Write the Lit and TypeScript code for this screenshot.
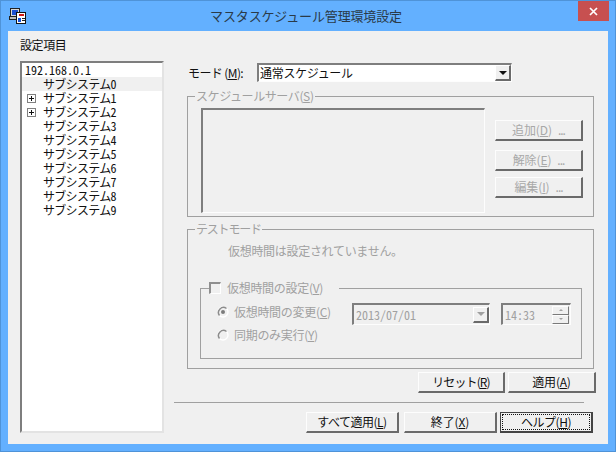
import { LitElement, html, css, svg } from "lit";
import { customElement } from "lit/decorators.js";

const appIcon = svg`<svg width="18" height="18" viewBox="0 0 18 18" shape-rendering="crispEdges">
  <rect x="1.5" y=".5" width="9" height="8" fill="#d8d8d8" stroke="#222"/>
  <rect x="3" y="2" width="6" height="5" fill="#1c4fd0"/>
  <rect x=".5" y="8.5" width="10" height="3" fill="#bcbcbc" stroke="#222"/>
  <rect x="7.5" y="4.5" width="9" height="11" fill="#fff" stroke="#111"/>
  <rect x="10" y="6" width="5" height="2" fill="#d01818"/>
  <rect x="9" y="10" width="3" height="4" fill="#1450d8"/>
  <rect x="13" y="10" width="3" height="1" fill="#222"/>
  <rect x="13" y="12" width="3" height="1" fill="#222"/>
</svg>`;

const radioRing = svg`
  <circle cx="6" cy="6" r="5" fill="#f0f0f0" stroke="#ffffff" stroke-width="1.4"/>
  <path d="M9.5 2.5A5 5 0 0 0 2.5 9.5" fill="none" stroke="#8c8c8c" stroke-width="1.5"/>
`;

const subsystems = [0, 1, 2, 3, 4, 5, 6, 7, 8, 9];

@customElement("app-root")
export class AppRoot extends LitElement {
  static styles = css`
    :host {
      display: block;
      width: 616px;
      height: 452px;
      font-family: "Noto Sans CJK JP", "Liberation Sans", sans-serif;
      font-size: 12px;
      line-height: 14px;
      color: #111;
    }
    * { box-sizing: border-box; }
    u { text-underline-offset: 1px; }
    .half { font-feature-settings: "hwid"; }
    .window {
      width: 616px;
      height: 452px;
      background: #63b0ff;
      border: 1px solid #4f93d8;
      padding: 0 7px 7px;
      display: flex;
      flex-direction: column;
    }
    .titlebar {
      height: 30px;
      flex: none;
      display: grid;
      grid-template-columns: 1fr auto 1fr;
      align-items: start;
    }
    .app-icon { padding: 7px 0 0 1px; height: 25px; }
    .title {
      font-size: 13px;
      letter-spacing: -0.15px;
      padding-top: 6px;
      line-height: 18px;
      color: #2a3a48;
      transform: translateX(-2px);
    }
    .close-wrap { display: flex; justify-content: flex-end; }
    .close {
      width: 31px;
      height: 20px;
      background: #c75050;
      color: #fff;
      display: flex;
      align-items: center;
      justify-content: center;
      margin-right: -1px;
    }
    .client {
      flex: 1;
      background: #f0f0f0;
      padding: 7px 12px 0 12px;
      display: flex;
      flex-direction: column;
      min-height: 0;
    }
    .items-label { height: 23px; letter-spacing: -0.4px; }
    .body {
      display: grid;
      grid-template-columns: 144px 1fr;
      column-gap: 10px;
    }
    .tree {
      height: 372px;
      background: #fff;
      border-style: solid;
      border-width: 2px;
      border-color: #7e7e7e #e3e3e3 #e3e3e3 #7e7e7e;
      letter-spacing: -0.7px;
    }
    .tree-row {
      height: 14px;
      display: flex;
      align-items: center;
      white-space: nowrap;
    }
    .tree-row.sel { background: #f0f0f0; }
    .tree-label { display: block; height: 14px; }
    .tree-ip { padding-left: 3px; letter-spacing: 0; }
    .expander {
      width: 16px;
      margin-left: 5px;
      flex: none;
      display: flex;
    }
    .plus { display: block; }
    .right {
      display: flex;
      flex-direction: column;
    }
    .mode-row {
      display: flex;
      align-items: center;
      padding: 2px 0 0 14px;
      height: 21px;
    }
    .mode-label { width: 69px; letter-spacing: -0.6px; white-space: nowrap; }
    .sunken {
      border-style: solid;
      border-width: 2px 1px 1px 2px;
      border-color: #7e7e7e #fdfdfd #fdfdfd #7e7e7e;
    }
    .combo {
      width: 255px;
      height: 19px;
      background: #fff;
      display: flex;
      align-items: center;
      justify-content: space-between;
      padding-left: 1px;
      letter-spacing: -0.3px;
    }
    .arrow-btn {
      width: 16px;
      height: 16px;
      flex: none;
      background: #f0f0f0;
      border-style: solid;
      border-width: 1px 2px 2px 1px;
      border-color: #fff #6a6a6a #6a6a6a #fff;
      display: flex;
      align-items: center;
      justify-content: center;
    }
    .tri {
      width: 0;
      height: 0;
      border-left: 4px solid transparent;
      border-right: 4px solid transparent;
      border-top: 4px solid #111;
    }
    .tri.off { border-top-color: #a0a0a0; }
    fieldset {
      margin: 0;
      padding: 0;
      border: 1px solid #a0a0a0;
      min-width: 0;
      color: #a0a0a0;
    }
    legend {
      padding: 0 1px;
      margin-left: 7px;
      line-height: 14px;
      letter-spacing: -0.4px;
    }
    .server-group {
      margin: 7px 2px 0 13px;
      height: 128px;
    }
    .server-body {
      display: flex;
      padding: 5px 10px 0 13px;
      justify-content: space-between;
    }
    .server-list {
      width: 284px;
      height: 105px;
      background: #f0f0f0;
      border-style: solid;
      border-width: 2px 1px 1px 2px;
      border-color: #7e7e7e #fdfdfd #fdfdfd #7e7e7e;
    }
    .server-btns {
      display: flex;
      flex-direction: column;
      padding-top: 12px;
    }
    .server-btns .btn { margin-bottom: 9px; }
    .server-btns .btn + .btn + .btn { margin-top: -3px; }
    .btn {
      height: 21px;
      background: #f0f0f0;
      border-style: solid;
      border-width: 1px 2px 2px 1px;
      border-color: #fdfdfd #6a6a6a #6a6a6a #fdfdfd;
      display: flex;
      align-items: center;
      justify-content: center;
      color: #111;
      letter-spacing: -0.5px;
      white-space: nowrap;
    }
    .btn.off { color: #a8a8a8; width: 88px; letter-spacing: -0.1px; }
    .btn.off .dots { margin-left: 6px; letter-spacing: -1px; }
    .test-group {
      margin: 5px 2px 0 13px;
      height: 147px;
    }
    .test-group > legend { letter-spacing: -1.2px; }
    .notice { padding: 8px 0 0 40px; height: 45px; letter-spacing: -0.3px; }
    .virtual-group {
      margin: 0 11px 0 12px;
      height: 78px;
    }
    .virtual-group legend {
      margin-left: 8px;
      padding: 0 16px 0 0;
      display: flex;
      align-items: center;
      letter-spacing: -0.3px;
    }
    .check {
      width: 12px;
      height: 12px;
      margin-right: 6px;
      background: #f0f0f0;
      border-style: solid;
      border-width: 2px 1px 1px 2px;
      border-color: #8f8f8f #fff #fff #8f8f8f;
    }
    .time-rows {
      display: grid;
      grid-template-columns: 135px 138px 69px;
      grid-template-rows: 22px 20px;
      padding: 8px 0 0 16px;
      align-items: start;
    }
    .radio-row {
      display: flex;
      align-items: center;
      height: 18px;
      white-space: nowrap;
      letter-spacing: -0.3px;
    }
    .radio-row.second { height: 20px; }
    .radio-row svg { margin-right: 5px; flex: none; }
    .field {
      height: 22px;
      background: #f0f0f0;
      display: flex;
      align-items: center;
      letter-spacing: 0;
      padding-left: 2px;
      justify-content: space-between;
    }
    .date { width: 138px; }
    .time { width: 70px; margin-left: 11px; }
    .spin { display: flex; flex-direction: column; width: 17px; flex: none; margin-right: 1px; }
    .spin div {
      height: 9px;
      background: #f0f0f0;
      border-style: solid;
      border-width: 1px;
      border-color: #fdfdfd #7a7a7a #7a7a7a #fdfdfd;
      display: flex;
      align-items: center;
      justify-content: center;
    }
    .spin i { width: 0; height: 0; border-left: 2px solid transparent; border-right: 2px solid transparent; }
    .spin .up i { border-bottom: 2px solid #a0a0a0; }
    .spin .down i { border-top: 2px solid #a0a0a0; }
    .apply-row {
      display: flex;
      justify-content: flex-end;
      gap: 3px;
      margin-top: 3px;
    }
    .apply-row .btn { height: 21px; width: 87px; }
    .apply-row .btn.wide { width: 88px; letter-spacing: -0.2px; }
    .apply-row .btn.reset { letter-spacing: -0.9px; }
    .sep {
      height: 1px;
      background: #a0a0a0;
      margin: 9px 12px 0 0;
    }
    .bottom-row {
      display: flex;
      justify-content: flex-end;
      margin-top: 9px;
      margin-right: 3px;
    }
    .bottom-row .btn { height: 21px; width: 93px; }
    .bottom-row .btn.quit { margin-left: 5px; letter-spacing: -0.1px; }
    .bottom-row .help {
      margin-left: 3px;
      border: 1px solid #444;
      border-right-width: 2px;
      border-bottom-width: 2px;
      padding: 1px;
    }
    .focus {
      width: 100%;
      height: 100%;
      border: 1px dotted #111;
      display: flex;
      align-items: center;
      justify-content: center;
    }
  `;

  render() {
    return html`
      <div class="window">
        <div class="titlebar">
          <div class="app-icon">${appIcon}</div>
          <div class="title">マスタスケジュール管理環境設定</div>
          <div class="close-wrap">
            <div class="close">
              <svg width="9" height="9" viewBox="0 0 9 9"><path d="M1 1L8 8M8 1L1 8" stroke="#fff" stroke-width="1.7"/></svg>
            </div>
          </div>
        </div>
        <div class="client">
          <div class="items-label">設定項目</div>
          <div class="body">
            <div class="tree">
              <div class="tree-row tree-ip half">192.168.0.1</div>
              ${subsystems.map(
                (n) => html`<div class="tree-row ${n === 0 ? "sel" : ""}">
                  <span class="expander">
                    ${n === 1 || n === 2
                      ? html`<svg class="plus" width="9" height="9" viewBox="0 0 9 9" shape-rendering="crispEdges">
                          <rect x=".5" y=".5" width="8" height="8" fill="#fff" stroke="#808080"/>
                          <path d="M2 4.5H7M4.5 2V7" stroke="#111"/>
                        </svg>`
                      : ""}
                  </span>
                  <span class="tree-label">サブシステム<span class="half">${n}</span></span>
                </div>`
              )}
            </div>
            <div class="right">
              <div class="mode-row">
                <span class="mode-label">モード (<u>M</u>):</span>
                <div class="combo sunken">
                  <span>通常スケジュール</span>
                  <span class="arrow-btn"><span class="tri"></span></span>
                </div>
              </div>
              <fieldset class="server-group">
                <legend>スケジュールサーバ(<u>S</u>)</legend>
                <div class="server-body">
                  <div class="server-list"></div>
                  <div class="server-btns">
                    <div class="btn off">追加(<u>D</u>)<span class="dots">...</span></div>
                    <div class="btn off">解除(<u>E</u>)<span class="dots">...</span></div>
                    <div class="btn off">編集(<u>I</u>)<span class="dots">...</span></div>
                  </div>
                </div>
              </fieldset>
              <fieldset class="test-group">
                <legend>テストモード</legend>
                <div class="notice">仮想時間は設定されていません。</div>
                <fieldset class="virtual-group">
                  <legend><span class="check"></span>仮想時間の設定(<u>V</u>)</legend>
                  <div class="time-rows">
                    <div class="radio-row">
                      <svg width="12" height="12" viewBox="0 0 12 12">
                        ${radioRing}
                        <circle cx="6" cy="6" r="2" fill="#7c7c7c"/>
                      </svg>
                      <span>仮想時間の変更(<u>C</u>)</span>
                    </div>
                    <div class="field sunken date half">
                      <span>2013/07/01</span>
                      <span class="arrow-btn"><span class="tri off"></span></span>
                    </div>
                    <div class="field sunken time half">
                      <span>14:33</span>
                      <span class="spin">
                        <div class="up"><i></i></div>
                        <div class="down"><i></i></div>
                      </span>
                    </div>
                    <div class="radio-row second">
                      <svg width="12" height="12" viewBox="0 0 12 12">${radioRing}</svg>
                      <span>同期のみ実行(<u>Y</u>)</span>
                    </div>
                  </div>
                </fieldset>
              </fieldset>
              <div class="apply-row">
                <div class="btn reset">リセット(<u>R</u>)</div>
                <div class="btn wide">適用(<u>A</u>)</div>
              </div>
              <div class="sep"></div>
              <div class="bottom-row">
                <div class="btn">すべて適用(<u>L</u>)</div>
                <div class="btn quit">終了(<u>X</u>)</div>
                <div class="btn help"><div class="focus">ヘルプ(<u>H</u>)</div></div>
              </div>
            </div>
          </div>
        </div>
      </div>
    `;
  }
}
